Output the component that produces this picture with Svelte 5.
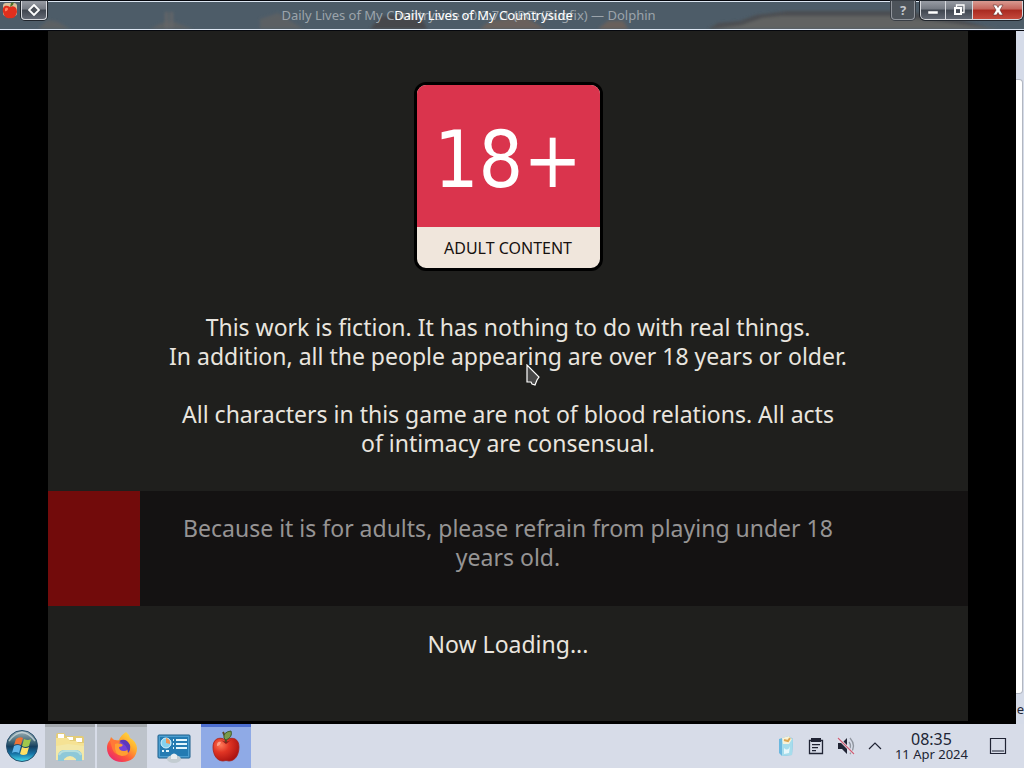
<script>
  const progress = 10;
</script>

<div class="desktop">
  <header class="titlebar">
    <svg class="backdrop" viewBox="0 0 1024 27" preserveAspectRatio="none" aria-hidden="true">
      <defs><filter id="haze"><feGaussianBlur stdDeviation="1.5" /></filter></defs>
      <rect width="1024" height="27" fill="#4d5c68" />
      <g filter="url(#haze)">
        <path d="M38 27l10-9 10 2 12 7zM150 27l10-5 5-2h10l4 2 14 5zM260 27v-10l18-6 25 16z" fill="#5c6063" />
        <path d="M165 10h3v17h-3zM170 10h3v17h-3z" fill="#656668" />
        <path d="M370 27l10-12 25-4 18 8 4 8z" fill="#46474b" />
        <path d="M480 27l10-8 35-4 20 12zM598 27l10-8 15 0 5 8z" fill="#69605c" />
        <path d="M708 27l10-6 22-2 16-6 32-4h112l50 6 44 12z" fill="#4b4e51" />
        <path d="M712 27l30-4 20-7 18-2h110l60 7 50 6z" fill="#626362" />
      </g>
    </svg>
    <div class="left-tools">
      <svg class="mini-apple" viewBox="0 0 16 18" aria-hidden="true">
        <rect x="1" y="1" width="14" height="13" rx="3" fill="#d8c09a" />
        <path d="M8 5C3 2 0 5 1 10c1 5 4 7 7 6 4 1 6-2 7-6 0-5-3-7-7-5z" fill="#df2f1d" />
        <path d="M3 7c1-2 3-1 3 0s-2 3-3 2z" fill="#ff8161" />
        <path d="M8 5l1-4 3-1-1 3z" fill="#4b6f26" />
      </svg>
      <button class="chrome pin" aria-label="Window menu">
        <svg viewBox="0 0 12 12" width="12" height="12"><path d="M6 1l5 5-5 5-5-5z" fill="#4b5058" stroke="#fff" stroke-width="1.8" /></svg>
      </button>
    </div>
    <div class="titles">
      <span class="behind">Daily Lives of My Countryside v0.2.7.1 (PC) (Bugfix) — Dolphin</span>
      <span class="front">Daily Lives of My Countryside</span>
    </div>
    <div class="window-tools">
      <button class="chrome help" aria-label="Help">?</button>
      <div class="group">
        <button class="chrome" aria-label="Minimize"><svg viewBox="0 0 12 12" width="12" height="12"><path d="M1 7h10v3H1z" fill="#fff" stroke="#4b4f58" stroke-width=".5" /></svg></button>
        <button class="chrome" aria-label="Restore"><svg viewBox="0 0 12 12" width="12" height="12"><path d="M3.500 3V1h7.500v7.500H9" fill="none" stroke="#fff" stroke-width="1.300" /><path d="M2 4h6v6H2z" fill="none" stroke="#fff" stroke-width="2" /></svg></button>
        <button class="chrome close" aria-label="Close"><svg viewBox="0 0 12 12" width="12" height="12"><path d="M1 1h3.500L6 3.500 7.500 1H11L8 6l3 5H7.500L6 8.500 4.500 11H1l3-5z" fill="#fff" stroke="#63302d" stroke-width=".6" /></svg></button>
      </div>
    </div>
  </header>

  <div class="workspace">
    <div class="letterbox">
      <main class="game">
        <div class="badge">
          <div class="age">18+</div>
          <div class="label">ADULT CONTENT</div>
        </div>
        <p class="notice">This work is fiction. It has nothing to do with real things.<br />In addition, all the people appearing are over 18 years or older.</p>
        <p class="notice">All characters in this game are not of blood relations. All acts<br />of intimacy are consensual.</p>
        <div class="band">
          <div class="fill" style="width: {progress}%"></div>
          <p>Because it is for adults, please refrain from playing under 18<br />years old.</p>
        </div>
        <p class="loading">Now Loading...</p>
      </main>
      <svg class="cursor" viewBox="0 0 14 22" width="14" height="22" aria-hidden="true"><path d="M1 1v17h4l1 2 3 1 2-5 2-3z" fill="#484848" stroke="#fff" stroke-width="1.200" /></svg>
    </div>
    <aside class="sliver"><div class="pane"></div><span>e</span></aside>
  </div>

  <footer class="taskbar">
    <nav class="tasks">
      <button class="start" aria-label="Start">
        <svg viewBox="0 0 34 34" width="34" height="34">
          <defs>
            <linearGradient id="orb" x1="0" y1="0" x2="0" y2="1"><stop offset="0" stop-color="#a2b3b9" /><stop offset=".35" stop-color="#456b7a" /><stop offset=".52" stop-color="#153f60" /><stop offset=".75" stop-color="#1673a6" /><stop offset="1" stop-color="#48dff0" /></linearGradient>
          </defs>
          <circle cx="17" cy="17" r="15.500" fill="url(#orb)" stroke="#254e6d" />
          <path d="M11 10q4-3 7-1l-2 7q-4-2-7 0z" fill="#ef7235" />
          <path d="M19 10q4 2 7 0l-2 7q-4 2-7 0z" fill="#a0c84b" />
          <path d="M9 17q4-2 7 0l-2 7q-4-2-7 0z" fill="#61b5ea" />
          <path d="M17 18q4 2 7 0l-2 7q-4 2-7 0z" fill="#ffe064" />
          <path d="M4 12Q17-5 30 12" fill="none" stroke="#e5eef0" stroke-opacity=".6" stroke-width="1.500" />
        </svg>
      </button>
      <button class="task open" aria-label="File manager">
        <svg viewBox="0 0 32 32" width="32" height="32">
          <path d="M2 4q0-2 2-2h6l2 3h16q2 0 2 2v22H2z" fill="#e3cc78" />
          <path d="M4 3h6v4H4zM13 6h6v3h-6zM22 7h6v4h-6z" fill="#fff" />
          <path d="M2 7h12l2 3h6l2 2h6v17H2z" fill="#f5e294" />
          <path d="M2 15l12-2 16 2v14H2z" fill="#f3e8a8" />
          <path d="M4 30v-6q1-5 7-5h10q6 0 7 5v6h-6v-2q-6-6-12 0v2z" fill="#8ec8d8" />
          <path d="M5 24q2-4 7-4h8q5 0 7 4" fill="none" stroke="#b6dedd" stroke-width="2" />
        </svg>
      </button>
      <button class="task open" aria-label="Firefox">
        <svg viewBox="0 0 32 32" width="32" height="32">
          <defs><linearGradient id="fox" x1="1" y1="0" x2=".2" y2="1"><stop offset="0" stop-color="#fff04b" /><stop offset=".4" stop-color="#ffab2c" /><stop offset=".7" stop-color="#ff563b" /><stop offset="1" stop-color="#e72572" /></linearGradient></defs>
          <path d="M20 1q3 2 4 6 6 3 7 10c0 9-6 14-15 14S1 25 1 17q0-5 3-8l1-3 4 4 4-1q2-5 7-8z" fill="url(#fox)" />
          <path d="M4 9q8-1 12 4l-5 3q-1 7 6 8-9 1-11-7z" fill="#ff7937" />
          <circle cx="17" cy="17" r="6.500" fill="#7541d8" />
          <path d="M9 13q5-2 8 1-1 2-4 2 0 4 5 4 4 0 5-4 1 9-7 9-8-1-7-12z" fill="#ff9f32" />
          <path d="M13 10q7-4 11 4 1 5-2 8 0-8-9-12z" fill="#5d38bb" />
        </svg>
      </button>
      <button class="task" aria-label="System settings">
        <svg viewBox="0 0 34 32" width="34" height="32">
          <rect x="1" y="4" width="32" height="23" rx="1" fill="#4c9ed0" stroke="#1a5c8a" />
          <rect x="3" y="6" width="28" height="19" fill="#247bb2" />
          <circle cx="9" cy="12" r="5" fill="#85d1ef" stroke="#d9f4ff" />
          <path d="M9 12V7a5 5 0 0 1 4 6z" fill="#f09556" />
          <path d="M19 9h11M19 13h11M19 17h11M5 20h2m2 0h3" stroke="#e1f5fc" stroke-width="2" />
          <path d="M16 9h1M16 13h1M16 17h1" stroke="#e1f5fc" stroke-width="2" />
          <ellipse cx="17" cy="28" rx="7" ry="4" fill="#c3ccd1" />
          <path d="M14 24q3-3 6 0v4h-6z" fill="#e7edef" />
        </svg>
      </button>
      <button class="task active" aria-label="Daily Lives of My Countryside">
        <svg viewBox="0 0 32 34" width="32" height="34">
          <defs><radialGradient id="apple" cx=".3" cy=".3" r=".8"><stop offset="0" stop-color="#ff7a59" /><stop offset=".4" stop-color="#e13524" /><stop offset="1" stop-color="#a6100f" /></radialGradient></defs>
          <path d="M16 10C9 6 3 9 3 17c0 8 4 14 10 14q3-1 6 0c6 0 10-6 10-14 0-8-6-11-13-7z" fill="url(#apple)" stroke="#a8221b" stroke-width=".8" />
          <path d="M11 10q5 3 10 0l-5 4z" fill="#88201b" />
          <path d="M16 12q0-5-3-10" fill="none" stroke="#614322" stroke-width="2" />
          <path d="M14 8q-1-6 7-7 2 6-5 9z" fill="#7a9a4a" stroke="#405e2d" />
          <path d="M7 14q1-3 4-2-1 4-4 4z" fill="#ffb098" fill-opacity=".8" />
        </svg>
      </button>
    </nav>
    <div class="tray">
      <svg viewBox="0 0 18 22" width="18" height="22" role="img" aria-label="Vault">
        <path d="M2 4l10-3 4 3-1 16-10 1-3-3z" fill="#6bb8df" /><path d="M5 5l11-1-1 16-10 1z" fill="#a6ddec" />
        <path d="M5 3l7-2 3 3-3 5-6 0z" fill="#f7f2d8" /><path d="M7 5l4 1 2-3" fill="none" stroke="#dca755" stroke-width="2" /><path d="M7 13q4 4 6-2l-1 7-5 1z" fill="#e7f8fb" />
      </svg>
      <svg viewBox="0 0 16 18" width="16" height="18" role="img" aria-label="Clipboard">
        <path d="M1.500 3.500h13v13h-13z" fill="none" stroke="#202434" stroke-width="1.300" /><path d="M3 1h10v4H3zM4 7h8v1.300H4zM4 10h6v1.300H4zM4 13h4v1.300H4z" fill="#202434" />
      </svg>
      <svg viewBox="0 0 18 18" width="18" height="18" role="img" aria-label="Muted">
        <path d="M1 6h4l5-5v16l-5-5H1z" fill="#202434" /><path d="M12 5q3 4 0 8M13 1q7 8 0 16" fill="none" stroke="#9096a0" stroke-width="1.300" /><path d="M1 1l16 16" stroke="#e9edf5" stroke-width="2.500" /><path d="M1 1l16 16" stroke="#cc6076" stroke-width="1.200" />
      </svg>
      <button class="plain" aria-label="Show hidden icons"><svg viewBox="0 0 14 8" width="14" height="8"><path d="M1 7l6-6 6 6" fill="none" stroke="#202434" stroke-width="1.200" /></svg></button>
      <div class="clock"><time class="time">08:35</time><time class="date">11 Apr 2024</time></div>
      <button class="plain" aria-label="Show desktop"><svg viewBox="0 0 18 18" width="18" height="18"><path d="M1.500 1.500h15v15h-15zM3 14h12" fill="none" stroke="#202434" stroke-width="1.200" /></svg></button>
    </div>
  </footer>
</div>

<style>
  :global(body) { margin: 0; background: #000; }
  * { box-sizing: border-box; }
  svg { display: block; }
  button { font: inherit; padding: 0; border: 0; background: none; display: flex; align-items: center; justify-content: center; }
  .desktop { min-height: 100vh; display: flex; flex-direction: column; font-family: "Noto Sans", sans-serif; }
  .titlebar { position: relative; height: 31px; display: flex; justify-content: space-between; align-items: flex-start; border-top: 1px solid #05070d; border-bottom: 1px solid #05070d; box-shadow: inset 0 1px #dce6f2, inset 0 -1px #dce6f2; background: #4d5c68; }
  .backdrop { position: absolute; left: 0; top: 1px; width: 100%; height: 27px; }
  .left-tools, .window-tools { position: relative; display: flex; align-items: flex-start; }
  .left-tools { padding-left: 2px; gap: 3px; }
  .mini-apple { width: 16px; height: 18px; margin-top: 1px; }
  .chrome { height: 19px; width: 26px; border: 1px solid #d6d8dd; border-top: 0; background: linear-gradient(#979ba3 0, #747982 45%, #3f454f 50%, #626873 100%); }
  .pin { border-radius: 0 0 4px 4px; box-shadow: 0 0 0 1px #20252c; }
  .titles { position: absolute; left: 0; right: 87px; top: 5px; display: grid; justify-items: center; font-size: 13px; line-height: 18px; }
  .titles span { grid-area: 1 / 1; white-space: nowrap; }
  .behind { color: #9ca4ab; }
  .front { color: #fff; padding-left: 30px; }
  .window-tools { gap: 5px; padding-right: 1px; }
  .help { width: 24px; border-color: #92969d; border-radius: 0 0 4px 4px; background: #4d535a; color: #c3c7cc; font-size: 13px; font-weight: 700; box-shadow: 0 0 0 1px #393e45; }
  .group { display: flex; border-radius: 0 0 5px 5px; box-shadow: 0 0 0 1px #20252c; overflow: hidden; }
  .group .chrome:first-child { border-bottom-left-radius: 5px; }
  .group .chrome + .chrome { border-left: 0; width: 27px; }
  .group .close.chrome { width: 50px; border-bottom-right-radius: 5px; background: linear-gradient(#d99a91 0, #c5655b 45%, #a92a20 50%, #c5493c 100%); }

  .workspace { flex: 1; display: flex; background: #d5dbe8; }
  .letterbox { position: relative; flex: 1; display: flex; padding: 0 48px; background: #000; border-bottom: 3px solid #000; }
  .game { flex: 1; background: #1f1f1d; color: #e9e5df; display: flex; flex-direction: column; align-items: center; padding-top: 51px; font-size: 23px; line-height: 29px; text-align: center; }
  p { margin: 0; }
  .badge { width: 189px; border: 3px solid #000; border-radius: 12px; background: #f0e6dc; overflow: hidden; margin-bottom: 42px; }
  .age { background: #da344d; color: #fff; font-family: "DejaVu Sans Condensed", "DejaVu Sans", sans-serif; font-stretch: condensed; font-size: 78px; line-height: 134px; padding-top: 8px; }
  .label { color: #17110f; font-size: 16px; line-height: 40px; padding-top: 1px; }
  .notice { margin-bottom: 29px; }
  .band { position: relative; align-self: stretch; background: #141212; color: #969494; padding: 23px 0 34px; margin: 4px 0 24px; }
  .fill { position: absolute; left: 0; top: 0; bottom: 0; background: #720b0b; }
  .band p { position: relative; }
  .cursor { position: absolute; left: 526px; top: 333px; }
  .sliver { width: 8px; overflow: hidden; display: flex; flex-direction: column; padding-top: 48px; color: #202434; font-size: 13px; line-height: 30px; }
  .pane { flex: 1; background: #fff; border: 1px solid #b2b7c1; border-left: 0; border-radius: 0 4px 4px 0; margin-right: 1px; }
  .sliver span { align-self: flex-end; }

  .taskbar { height: 44px; display: flex; justify-content: space-between; background: #d7dce8; color: #202434; }
  .tasks { display: flex; gap: 2px; }
  .start { width: 43px; }
  .task { width: 50px; border-top: 3px solid transparent; padding-bottom: 2px; }
  .open { background: #bdc3cb; border-color: #a3a8ad; }
  .active { background: #8faae6; border-color: #4c6ed0; }
  .tray { display: flex; align-items: center; gap: 13px; padding-right: 17px; }
  .clock { display: flex; flex-direction: column; text-align: center; margin-right: 8px; }
  .time { font-size: 16px; line-height: 16px; }
  .date { font-size: 13px; line-height: 14px; }
</style>
